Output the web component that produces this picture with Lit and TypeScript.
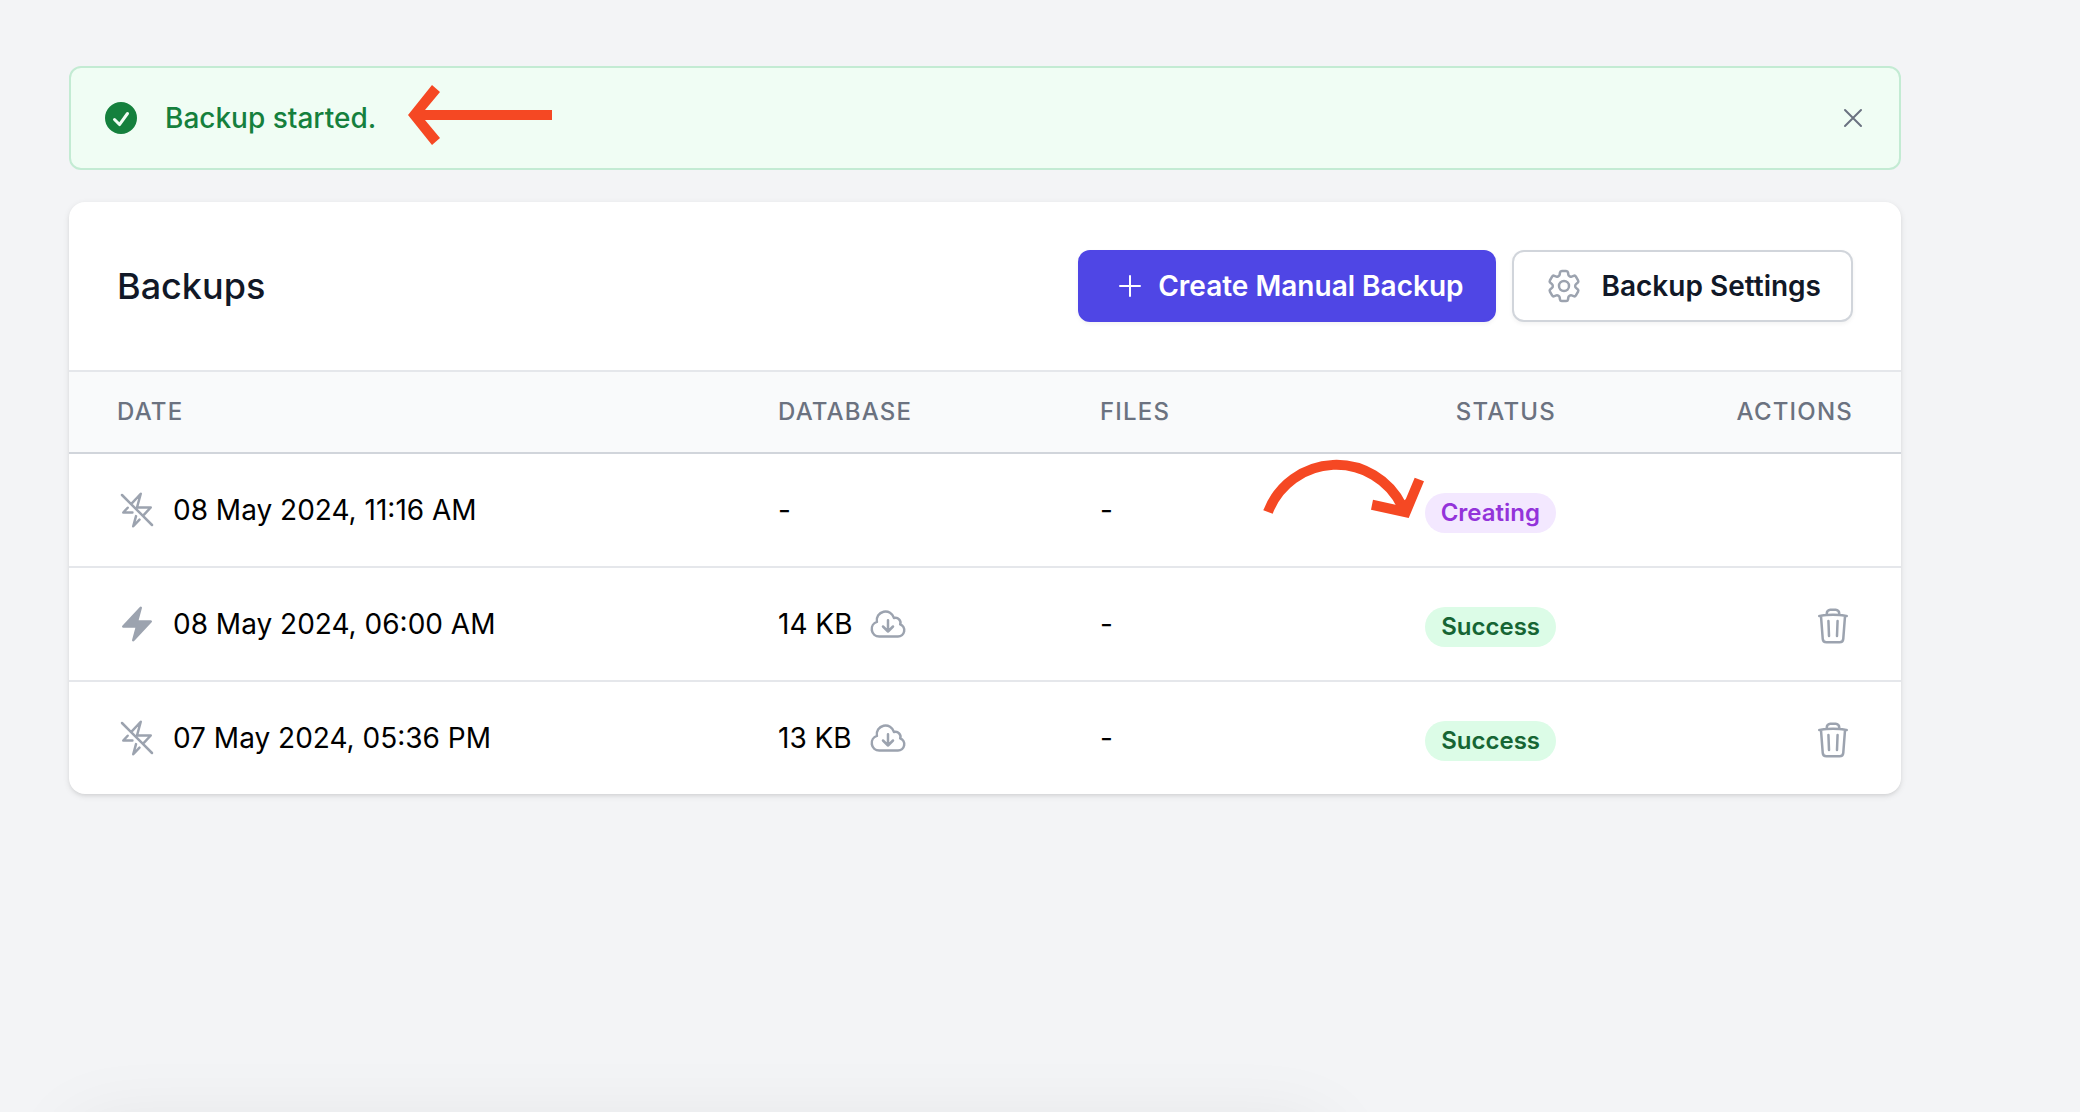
import { LitElement, html, css, svg, nothing } from "lit";
import { customElement, state } from "lit/decorators.js";

interface Backup {
  date: string;
  automatic: boolean;
  database: string | null;
  files: string | null;
  status: "Creating" | "Success";
}

const BACKUPS: Backup[] = [
  { date: "08 May 2024, 11:16 AM", automatic: false, database: null, files: null, status: "Creating" },
  { date: "08 May 2024, 06:00 AM", automatic: true, database: "14 KB", files: null, status: "Success" },
  { date: "07 May 2024, 05:36 PM", automatic: false, database: "13 KB", files: null, status: "Success" },
];

const outline = (size: string, path: string, extra: unknown = nothing) => html`
  <svg class="icon ${size}" viewBox="0 0 24 24" fill="none" stroke="currentColor" stroke-width="1.5"
    stroke-linecap="round" stroke-linejoin="round" aria-hidden="true">
    ${svg`<path d=${path}></path>`}${extra}
  </svg>`;

const plusIcon = outline("small", "M12 4.5v15m7.5-7.5h-15");
const closeIcon = outline("small", "M6 18L18 6M6 6l12 12");
const gearIcon = outline(
  "large",
  "M9.594 3.94c.09-.542.56-.94 1.11-.94h2.593c.55 0 1.02.398 1.11.94l.213 1.281c.063.374.313.686.645.87.074.04.147.083.22.127.324.196.72.257 1.075.124l1.217-.456a1.125 1.125 0 011.37.49l1.296 2.247a1.125 1.125 0 01-.26 1.431l-1.003.827c-.293.24-.438.613-.431.992a6.759 6.759 0 010 .255c-.007.378.138.75.43.99l1.005.828c.424.35.534.954.26 1.43l-1.298 2.247a1.125 1.125 0 01-1.369.491l-1.217-.456c-.355-.133-.75-.072-1.076.124a6.57 6.57 0 01-.22.128c-.331.183-.581.495-.644.869l-.213 1.28c-.09.543-.56.941-1.11.941h-2.594c-.55 0-1.02-.398-1.11-.94l-.213-1.281c-.062-.374-.312-.686-.644-.87a6.52 6.52 0 01-.22-.127c-.325-.196-.72-.257-1.076-.124l-1.217.456a1.125 1.125 0 01-1.369-.49l-1.297-2.247a1.125 1.125 0 01.26-1.431l1.004-.827c.292-.24.437-.613.43-.992a6.932 6.932 0 010-.255c.007-.378-.138-.75-.43-.99l-1.004-.828a1.125 1.125 0 01-.26-1.43l1.297-2.247a1.125 1.125 0 011.37-.491l1.216.456c.356.133.751.072 1.076-.124.072-.044.146-.087.22-.128.332-.183.582-.495.644-.869l.214-1.281z",
  svg`<path d="M15 12a3 3 0 11-6 0 3 3 0 016 0z"></path>`,
);
const boltSlashIcon = outline(
  "large",
  "M11.412 15.655L9.75 21.75l3.745-4.012M9.257 13.5H3.75l2.659-2.849m2.048-2.194L14.25 2.25 12 10.5h8.25l-4.707 5.043M8.457 8.457L3 3m5.457 5.457l7.086 7.086m0 0L21 21",
);
const cloudIcon = outline(
  "large",
  "M12 9.75v6.75m0 0l-3-3m3 3l3-3m-8.25 6a4.5 4.5 0 01-1.41-8.775 5.25 5.25 0 0110.233-2.33 3 3 0 013.758 3.848A3.752 3.752 0 0118 19.5H6.75z",
);
const trashIcon = outline(
  "large",
  "M14.74 9l-.346 9m-4.788 0L9.26 9m9.968-3.21c.342.052.682.107 1.022.166m-1.022-.165L18.16 19.673a2.25 2.25 0 01-2.244 2.077H8.084a2.25 2.25 0 01-2.244-2.077L4.772 5.79m14.456 0a48.108 48.108 0 00-3.478-.397m-12 .562c.34-.059.68-.114 1.022-.165m0 0a48.11 48.11 0 013.478-.397m7.5 0v-.916c0-1.18-.91-2.164-2.09-2.201a51.964 51.964 0 00-3.32 0c-1.18.037-2.09 1.022-2.09 2.201v.916m7.5 0a48.667 48.667 0 00-7.5 0",
);
const boltIcon = html`
  <svg class="icon large" viewBox="0 0 24 24" fill="currentColor" aria-hidden="true">
    <path fill-rule="evenodd" d="M14.615 1.595a.75.75 0 01.359.852L12.982 9.75h7.268a.75.75 0 01.548 1.262l-10.5 11.25a.75.75 0 01-1.272-.71l1.992-7.302H3.75a.75.75 0 01-.548-1.262l10.5-11.25a.75.75 0 01.913-.143z" clip-rule="evenodd"></path>
  </svg>`;
const checkIcon = html`
  <svg class="icon large" viewBox="0 0 20 20" fill="currentColor" aria-hidden="true">
    <path fill-rule="evenodd" d="M10 18a8 8 0 100-16 8 8 0 000 16zm3.857-9.809a.75.75 0 00-1.214-.882l-3.483 4.79-1.88-1.88a.75.75 0 10-1.06 1.061l2.5 2.5a.75.75 0 001.137-.089l4-5.5z" clip-rule="evenodd"></path>
  </svg>`;

@customElement("app-root")
export class AppRoot extends LitElement {
  static styles = css`
    :host {
      display: block;
      font-family: Inter, "Liberation Sans", sans-serif;
      font-size: 28px;
      line-height: 40px;
      color: #000;
    }
    *, *::before, *::after { box-sizing: border-box; }
    .page {
      position: relative;
      display: flex;
      flex-direction: column;
      gap: 32px;
      min-height: 100vh;
      padding: 66px 179px 66px 69px;
      background: #f3f4f6;
      overflow: hidden;
    }
    .icon { display: block; flex: none; }
    .small { width: 32px; height: 32px; }
    .large { width: 40px; height: 40px; }
    button { font: inherit; cursor: pointer; }

    .alert {
      position: relative;
      display: flex;
      align-items: center;
      gap: 24px;
      padding: 30px;
      border: 2px solid #c3ebd3;
      border-radius: 12px;
      background: #f0fdf4;
      color: #15803d;
      font-weight: 500;
    }
    .alert p { margin: 0; flex: 1; }
    .bare {
      display: block;
      padding: 0;
      border: 0;
      background: none;
      color: #9ca3af;
    }
    .dismiss { color: #6b7280; }

    .card {
      position: relative;
      border-radius: 16px;
      background: #fff;
      box-shadow: 0 2px 6px rgba(0, 0, 0, 0.1), 0 2px 4px -2px rgba(0, 0, 0, 0.1);
    }
    .head {
      display: flex;
      align-items: center;
      justify-content: space-between;
      padding: 48px;
      border-bottom: 2px solid #e5e7eb;
    }
    h1 {
      margin: 0;
      font-size: 36px;
      line-height: 48px;
      font-weight: 500;
      color: #111827;
    }
    .buttons { display: flex; gap: 16px; }
    .button {
      display: flex;
      align-items: center;
      gap: 18px;
      height: 72px;
      padding: 0 30px;
      border: 2px solid #d1d5db;
      border-radius: 12px;
      background: #fff;
      color: #111827;
      font-weight: 600;
      box-shadow: 0 2px 4px rgba(0, 0, 0, 0.05);
    }
    .button .icon { color: #9ca3af; }
    .primary {
      gap: 12px;
      padding-left: 34px;
      border-color: #4f46e5;
      background: #4f46e5;
      color: #fff;
    }
    .primary .icon { color: #fff; }

    table {
      width: 100%;
      table-layout: fixed;
      border-collapse: separate;
      border-spacing: 0;
    }
    .col-database { width: 322px; }
    .col-files { width: 321px; }
    .col-status { width: 183px; }
    .col-actions { width: 321px; }
    th {
      height: 82px;
      padding: 0 24px;
      border-bottom: 2px solid #d1d5db;
      background: #f9fafb;
      color: #6b7280;
      font-size: 24px;
      line-height: 32px;
      font-weight: 500;
      letter-spacing: 0.05em;
      text-align: left;
      text-transform: uppercase;
    }
    td {
      height: 114px;
      padding: 0 24px;
      border-bottom: 2px solid #e5e7eb;
      vertical-align: middle;
    }
    tbody tr:last-child td { height: 112px; border-bottom: 0; }
    th:first-child, td:first-child { padding-left: 48px; }
    th:last-child, td:last-child { padding-right: 48px; }
    th.end { text-align: right; }
    .cell {
      display: flex;
      align-items: center;
      gap: 16px;
    }
    .cell > .icon { color: #9ca3af; }
    .cell.end { justify-content: flex-end; }
    td.status { padding-top: 6px; }
    td.actions { padding-top: 4px; }
    .badge {
      padding: 4px 16px;
      border-radius: 20px;
      font-size: 24px;
      line-height: 32px;
      font-weight: 600;
      background: #dcfce7;
      color: #166534;
    }
    .badge.creating { background: #f3e8ff; color: #9333da; }

    .pointer { position: absolute; fill: #f54823; pointer-events: none; }
    .pointer-alert { left: 337px; top: 17px; width: 146px; height: 62px; }
    .pointer-status { right: 475px; top: 256px; width: 164px; height: 62px; }
    .arc { fill: none; stroke: #f54823; stroke-width: 10; }

    .below {
      position: absolute;
      left: 76px;
      top: 100%;
      width: 60%;
      height: 200px;
      box-shadow: 0 16px 80px rgba(0, 0, 0, 0.08);
    }
  `;

  @state() private alertOpen = true;

  private renderAlert() {
    return html`
      <div class="alert" role="status">
        ${checkIcon}
        <p>Backup started.</p>
        <button class="bare dismiss" aria-label="Dismiss" @click=${() => (this.alertOpen = false)}>${closeIcon}</button>
        <svg class="pointer pointer-alert" viewBox="0 0 146 62" aria-hidden="true">
          <polygon points="0,30 24,0 32,7 17,25 144,25 144,35 17,35 32,53 24,60"></polygon>
        </svg>
      </div>`;
  }

  private renderSize(size: string | null, label: string) {
    return size === null
      ? "-"
      : html`<div class="cell">
          <span>${size}</span>
          <button class="bare" aria-label="Download ${label}">${cloudIcon}</button>
        </div>`;
  }

  private renderRow(b: Backup) {
    const done = b.status === "Success";
    return html`
      <tr>
        <td><div class="cell">${b.automatic ? boltIcon : boltSlashIcon}<span>${b.date}</span></div></td>
        <td>${this.renderSize(b.database, "database")}</td>
        <td>${this.renderSize(b.files, "files")}</td>
        <td class="status">
          <div class="cell end"><span class="badge ${done ? "" : "creating"}">${b.status}</span></div>
        </td>
        <td class="actions">
          ${done
            ? html`<div class="cell end"><button class="bare" aria-label="Delete backup">${trashIcon}</button></div>`
            : nothing}
        </td>
      </tr>`;
  }

  render() {
    return html`
      <main class="page">
        ${this.alertOpen ? this.renderAlert() : nothing}
        <section class="card">
          <header class="head">
            <h1>Backups</h1>
            <div class="buttons">
              <button class="button primary">${plusIcon}<span>Create Manual Backup</span></button>
              <button class="button">${gearIcon}<span>Backup Settings</span></button>
            </div>
          </header>
          <table>
            <colgroup>
              <col />
              <col class="col-database" />
              <col class="col-files" />
              <col class="col-status" />
              <col class="col-actions" />
            </colgroup>
            <thead>
              <tr>
                <th scope="col">Date</th>
                <th scope="col">Database</th>
                <th scope="col">Files</th>
                <th scope="col" class="end">Status</th>
                <th scope="col" class="end">Actions</th>
              </tr>
            </thead>
            <tbody>${BACKUPS.map((b) => this.renderRow(b))}</tbody>
          </table>
          <svg class="pointer pointer-status" viewBox="0 0 164 62" aria-hidden="true">
            <path class="arc" d="M6 54 A73 73 0 0 1 140 48"></path>
            <polygon points="146.700,60 162,23.300 152.700,19.700 143.700,41.300 134.700,47 111,41.700 109,51.700"></polygon>
          </svg>
        </section>
        <div class="below"></div>
      </main>`;
  }
}
